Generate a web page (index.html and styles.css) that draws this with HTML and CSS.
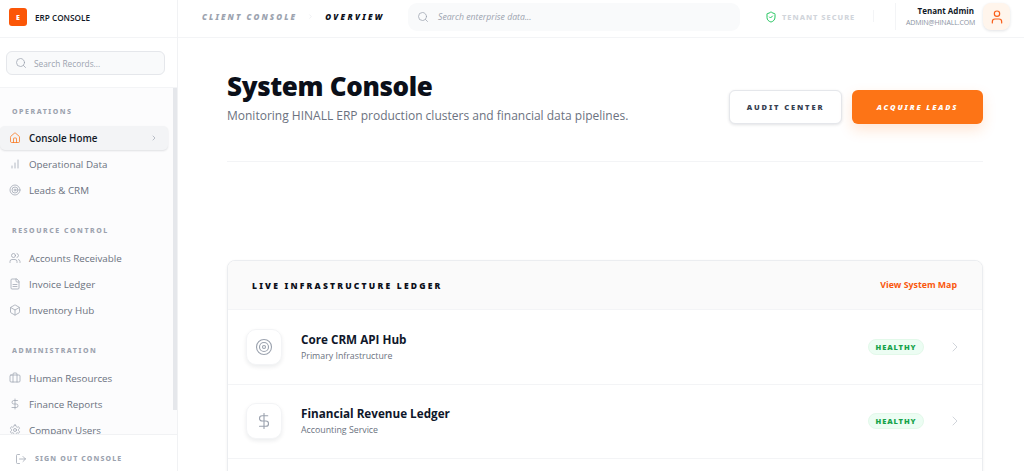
FILE: index.html
```html
<!DOCTYPE html>
<html lang="en">
<head>
<meta charset="utf-8">
<title>ERP Console</title>
<link rel="stylesheet" href="styles.css">
</head>
<body>
<div class="app">
  <aside class="sidebar">
    <div class="brand"><span class="logo">E</span><span class="brand-name">ERP CONSOLE</span></div>
    <div class="side-search-wrap">
      <div class="side-search">
        <svg class="ic" viewBox="0 0 24 24"><circle cx="11" cy="11" r="8"/><path d="m21 21-4.3-4.3"/></svg>
        <span>Search Records...</span>
      </div>
    </div>
    <nav class="nav">
      <div class="nav-label">OPERATIONS</div>
      <a class="nav-item active">
        <svg class="ic" viewBox="0 0 24 24"><path d="M15 21v-8a1 1 0 0 0-1-1h-4a1 1 0 0 0-1 1v8"/><path d="M3 10a2 2 0 0 1 .7-1.5l7-6a2 2 0 0 1 2.6 0l7 6A2 2 0 0 1 21 10v9a2 2 0 0 1-2 2H5a2 2 0 0 1-2-2z"/></svg>
        <span>Console Home</span>
        <svg class="chev" viewBox="0 0 24 24"><path d="m9 18 6-6-6-6"/></svg>
      </a>
      <a class="nav-item"><svg class="ic" viewBox="0 0 24 24"><path d="M12 20V10"/><path d="M18 20V4"/><path d="M6 20v-4"/></svg><span>Operational Data</span></a>
      <a class="nav-item"><svg class="ic" viewBox="0 0 24 24"><circle cx="12" cy="12" r="10"/><circle cx="12" cy="12" r="6"/><circle cx="12" cy="12" r="2"/></svg><span>Leads &amp; CRM</span></a>

      <div class="nav-label next">RESOURCE CONTROL</div>
      <a class="nav-item"><svg class="ic" viewBox="0 0 24 24"><path d="M16 21v-2a4 4 0 0 0-4-4H6a4 4 0 0 0-4 4v2"/><circle cx="9" cy="7" r="4"/><path d="M22 21v-2a4 4 0 0 0-3-3.870"/><path d="M16 3.130a4 4 0 0 1 0 7.750"/></svg><span>Accounts Receivable</span></a>
      <a class="nav-item"><svg class="ic" viewBox="0 0 24 24"><path d="M15 2H6a2 2 0 0 0-2 2v16a2 2 0 0 0 2 2h12a2 2 0 0 0 2-2V7z"/><path d="M14 2v4a2 2 0 0 0 2 2h4"/><path d="M16 13H8"/><path d="M16 17H8"/></svg><span>Invoice Ledger</span></a>
      <a class="nav-item"><svg class="ic" viewBox="0 0 24 24"><path d="M21 8a2 2 0 0 0-1-1.730l-7-4a2 2 0 0 0-2 0l-7 4A2 2 0 0 0 3 8v8a2 2 0 0 0 1 1.730l7 4a2 2 0 0 0 2 0l7-4A2 2 0 0 0 21 16z"/><path d="m3.300 7 8.700 5 8.700-5"/><path d="M12 22V12"/></svg><span>Inventory Hub</span></a>

      <div class="nav-label next">ADMINISTRATION</div>
      <a class="nav-item"><svg class="ic" viewBox="0 0 24 24"><path d="M16 20V4a2 2 0 0 0-2-2h-4a2 2 0 0 0-2 2v16"/><rect x="2" y="6" width="20" height="14" rx="2"/></svg><span>Human Resources</span></a>
      <a class="nav-item"><svg class="ic" viewBox="0 0 24 24"><path d="M12 2v20"/><path d="M17 5H9.500a3.500 3.500 0 0 0 0 7h5a3.500 3.500 0 0 1 0 7H6"/></svg><span>Finance Reports</span></a>
      <a class="nav-item"><svg class="ic" viewBox="0 0 24 24"><path d="M12.220 2h-.440a2 2 0 0 0-2 2v.180a2 2 0 0 1-1 1.730l-.430.250a2 2 0 0 1-2 0l-.150-.080a2 2 0 0 0-2.730.730l-.220.380a2 2 0 0 0 .730 2.730l.150.100a2 2 0 0 1 1 1.720v.510a2 2 0 0 1-1 1.740l-.150.090a2 2 0 0 0-.730 2.730l.220.380a2 2 0 0 0 2.730.730l.150-.080a2 2 0 0 1 2 0l.430.250a2 2 0 0 1 1 1.730V20a2 2 0 0 0 2 2h.440a2 2 0 0 0 2-2v-.180a2 2 0 0 1 1-1.730l.430-.250a2 2 0 0 1 2 0l.150.080a2 2 0 0 0 2.730-.730l.220-.390a2 2 0 0 0-.730-2.730l-.150-.080a2 2 0 0 1-1-1.740v-.500a2 2 0 0 1 1-1.740l.150-.090a2 2 0 0 0 .730-2.730l-.220-.380a2 2 0 0 0-2.730-.730l-.150.080a2 2 0 0 1-2 0l-.430-.250a2 2 0 0 1-1-1.730V4a2 2 0 0 0-2-2z"/><circle cx="12" cy="12" r="3"/></svg><span>Company Users</span></a>
    </nav>
    <div class="signout">
      <svg class="ic" viewBox="0 0 24 24"><path d="M9 21H5a2 2 0 0 1-2-2V5a2 2 0 0 1 2-2h4"/><path d="m16 17 5-5-5-5"/><path d="M21 12H9"/></svg>
      <span>SIGN OUT CONSOLE</span>
    </div>
  </aside>

  <div class="workspace">
    <header class="topbar">
      <div class="crumbs">
        <span class="crumb-muted">CLIENT CONSOLE</span>
        <svg class="crumb-sep" viewBox="0 0 24 24"><path d="m9 18 6-6-6-6"/></svg>
        <span class="crumb-now">OVERVIEW</span>
      </div>
      <div class="top-search">
        <svg class="ic" viewBox="0 0 24 24"><circle cx="11" cy="11" r="8"/><path d="m21 21-4.3-4.3"/></svg>
        <span>Search enterprise data...</span>
      </div>
      <div class="secure">
        <svg class="shield" viewBox="0 0 24 24"><path d="M20 13c0 5-3.500 7.500-7.660 8.950a1 1 0 0 1-.670-.010C7.500 20.500 4 18 4 13V6a1 1 0 0 1 1-1c2 0 4.500-1.200 6.240-2.720a1.170 1.170 0 0 1 1.520 0C14.510 3.810 17 5 19 5a1 1 0 0 1 1 1z"/><path d="m9 12 2 2 4-4"/></svg>
        <span>TENANT SECURE</span>
      </div>
      <div class="tick"></div>
      <div class="account">
        <div class="who"><div class="who-name">Tenant Admin</div><div class="who-mail">ADMIN@HINALL.COM</div></div>
        <div class="avatar"><svg viewBox="0 0 24 24"><path d="M19 21v-2a4 4 0 0 0-4-4H9a4 4 0 0 0-4 4v2"/><circle cx="12" cy="7" r="4"/></svg></div>
      </div>
    </header>

    <main class="main">
      <section class="hero">
        <div class="hero-text">
          <h1>System Console</h1>
          <p>Monitoring HINALL ERP production clusters and financial data pipelines.</p>
        </div>
        <div class="hero-actions">
          <button class="btn btn-white">AUDIT CENTER</button>
          <button class="btn btn-orange">ACQUIRE LEADS</button>
        </div>
      </section>

      <section class="card">
        <div class="card-head">
          <h2>LIVE INFRASTRUCTURE LEDGER</h2>
          <a class="map-link">View System Map</a>
        </div>
        <div class="row">
          <div class="row-icon"><svg viewBox="0 0 24 24"><circle cx="12" cy="12" r="10"/><circle cx="12" cy="12" r="6"/><circle cx="12" cy="12" r="2"/></svg></div>
          <div class="row-text"><div class="row-title">Core CRM API Hub</div><div class="row-sub">Primary Infrastructure</div></div>
          <span class="pill">HEALTHY</span>
          <svg class="row-chev" viewBox="0 0 24 24"><path d="m9 18 6-6-6-6"/></svg>
        </div>
        <div class="row">
          <div class="row-icon"><svg viewBox="0 0 24 24"><path d="M12 2v20"/><path d="M17 5H9.500a3.500 3.500 0 0 0 0 7h5a3.500 3.500 0 0 1 0 7H6"/></svg></div>
          <div class="row-text"><div class="row-title">Financial Revenue Ledger</div><div class="row-sub">Accounting Service</div></div>
          <span class="pill">HEALTHY</span>
          <svg class="row-chev" viewBox="0 0 24 24"><path d="m9 18 6-6-6-6"/></svg>
        </div>
        <div class="row"></div>
      </section>
    </main>
  </div>
</div>
</body>
</html>
```
FILE: styles.css
```css
* { box-sizing: border-box; }
html, body { margin: 0; height: 100%; overflow: hidden; }
body { font-family: "Open Sans", "Noto Sans", sans-serif; color: #0f172a; background: #fff; }
svg { fill: none; stroke: currentColor; stroke-width: 2; stroke-linecap: round; stroke-linejoin: round; flex: none; }
.app { display: flex; height: 471px; }

.sidebar { width: 178px; flex: none; display: flex; flex-direction: column; border-right: 1px solid #f1f2f4; background: #fff; }
.brand { height: 38px; flex: none; display: flex; align-items: center; gap: 8px; padding: 0 9px 3px; border-bottom: 1px solid #f3f4f6; }
.logo { width: 18px; height: 18px; border-radius: 3px; background: #fb5607; color: #fff; font-size: 7px; font-weight: 800; display: flex; align-items: center; justify-content: center; }
.brand-name { font-size: 8.200px; font-weight: 600; color: #111827; }
.side-search-wrap { height: 50px; flex: none; padding: 13px 12px 0 6px; border-bottom: 1px solid #f3f4f6; }
.side-search { height: 24px; border: 1px solid #e5e7eb; border-radius: 6px; background: #f9fafb; display: flex; align-items: center; gap: 7px; padding: 0 8px; color: #9ca3af; font-size: 8.300px; }
.ic { width: 12px; height: 12px; stroke-width: 1.5; color: #9ca3af; }
.nav { flex: 1; min-height: 0; padding-top: 18px; background: #fcfcfd; overflow: hidden; position: relative; }
.nav::after { content: ""; position: absolute; top: 0; right: 0; width: 4px; height: 322px; background: #e5e7eb; }
.nav-label { font-family: "Noto Sans", sans-serif; font-size: 7px; font-weight: 800; letter-spacing: .22em; color: #9ca3af; padding-left: 12px; height: 12px; line-height: 12px; margin-bottom: 8px; }
.nav-label.next { margin-top: 22px; }
.nav-item { height: 26px; display: flex; align-items: center; gap: 8px; padding-left: 9px; font-size: 9.800px; font-weight: 500; color: #6b7280; }
.nav-item.active { height: 24px; margin: 1px 9px 1px 0; color: #111827; background: #f3f4f6; border-radius: 5px; box-shadow: 0 1px 2px rgba(15,23,42,.12); font-weight: 600; }
.nav-item.active .ic { color: #f97316; }
.chev { width: 8px; height: 8px; margin-left: auto; margin-right: 10px; color: #9ca3af; }
.signout { height: 37px; flex: none; display: flex; align-items: flex-start; gap: 8px; padding: 18px 0 0 15px; line-height: 12px; border-top: 1px solid #f1f2f4; font-family: "Noto Sans", sans-serif; font-size: 7px; font-weight: 800; letter-spacing: .16em; color: #9ca3af; }

.workspace { flex: 1; min-width: 0; display: flex; flex-direction: column; }
.topbar { height: 38px; flex: none; display: flex; align-items: flex-start; padding: 3px 14px 0 24px; border-bottom: 1px solid #f3f4f6; }
.crumbs { width: 206px; height: 27px; flex: none; display: flex; align-items: center; font-family: "Noto Sans", sans-serif; font-size: 8px; font-weight: 900; font-style: italic; letter-spacing: .26em; }
.crumb-muted { color: #9ca3af; }
.crumb-sep { width: 7px; height: 7px; color: #e5e7eb; margin: 0 11px 0 10px; }
.crumb-now { color: #0b0f19; letter-spacing: .29em; }
.top-search { width: 332px; height: 28px; flex: none; border-radius: 9px; background: #f9fafb; display: flex; align-items: center; gap: 9px; padding: 0 9px; font-size: 8.700px; font-style: italic; color: #9ca3af; }
.secure { height: 27px; margin-left: 25px; display: flex; align-items: center; gap: 5px; font-family: "Noto Sans", sans-serif; font-size: 7.500px; font-weight: 800; letter-spacing: .13em; color: #d1d5db; white-space: nowrap; }
.shield { width: 12px; height: 12px; color: #22c55e; stroke-width: 2; }
.tick { width: 1px; height: 12px; margin: 7px 0 0 18px; background: #f3f4f6; }
.account { height: 27px; margin-left: 21px; padding-left: 10px; border-left: 1px solid #f3f4f6; display: flex; gap: 9px; align-items: center; }
.who { text-align: right; width: 68px; }
.who-name { font-size: 8px; font-weight: 700; color: #111827; line-height: 11px; white-space: nowrap; }
.who-mail { font-size: 7px; color: #8b93a1; line-height: 11px; margin-top: 1px; white-space: nowrap; letter-spacing: -.02em; }
.avatar { width: 27px; height: 27px; border-radius: 8px; background: #fff5ec; box-shadow: 0 1px 3px rgba(15,23,42,.12); display: flex; align-items: center; justify-content: center; color: #f95f1a; }
.avatar svg { width: 16px; height: 16px; stroke-width: 1.8; }

.main { flex: 1; min-height: 0; overflow: hidden; padding: 29px 41px 0 49px; }
.hero { height: 95px; display: flex; justify-content: space-between; align-items: flex-start; border-bottom: 1px solid #f3f4f6; }
.hero-text h1 { margin: 0; font-family: "Noto Sans", sans-serif; font-size: 26px; line-height: 38px; font-weight: 900; color: #0b0f19; letter-spacing: -.35px; }
.hero-text p { margin: 2px 0 0; font-size: 12px; line-height: 18px; font-weight: 500; color: #6b7280; }
.hero-actions { display: flex; gap: 10px; margin-top: 23px; }
.btn { height: 34px; border-radius: 6px; font-family: "Noto Sans", sans-serif; font-size: 7.500px; font-weight: 900; letter-spacing: .25em; }
.btn-white { width: 113px; background: #fff; border: 1px solid #e5e7eb; color: #374151; box-shadow: 0 1px 3px rgba(15,23,42,.12); }
.btn-orange { width: 131px; background: #fd7416; border: 0; color: #fff; font-style: italic; box-shadow: 0 6px 14px rgba(253,116,22,.18); }

.card { margin-top: 98px; border: 1px solid #ebedf0; border-radius: 8px 8px 0 0; box-shadow: 0 1px 3px rgba(15,23,42,.06); overflow: hidden; background: #fff; }
.card-head { height: 48px; display: flex; align-items: center; justify-content: space-between; padding: 0 25px 0 24px; background: #fafafa; }
.card-head h2 { margin: 0; font-family: "Noto Sans", sans-serif; font-size: 8.500px; font-weight: 900; letter-spacing: .26em; color: #0b0f19; }
.map-link { font-size: 8.800px; font-weight: 700; color: #f9580e; }
.row { height: 74.500px; display: flex; align-items: center; padding: 0 18px; border-top: 1px solid #f3f4f6; }
.row-icon { width: 36px; height: 36px; border-radius: 10px; background: #fff; border: 1px solid #f3f4f6; box-shadow: 0 2px 4px rgba(15,23,42,.08); display: flex; align-items: center; justify-content: center; color: #9ca3af; }
.row-icon svg { width: 18px; height: 18px; stroke-width: 1.5; }
.row-text { margin-left: 19px; flex: 1; }
.row-title { font-size: 11.700px; font-weight: 700; color: #0f172a; line-height: 17px; }
.row-sub { font-size: 8.800px; font-weight: 500; color: #6b7280; line-height: 13px; margin-top: 2px; }
.pill { width: 56px; height: 16px; border-radius: 8px; background: #ecfdf3; border: 1px solid #e3f9ea; color: #16a34a; font-family: "Noto Sans", sans-serif; font-size: 7.500px; font-weight: 900; letter-spacing: .12em; display: flex; align-items: center; justify-content: center; }
.row-chev { width: 16px; height: 16px; color: #d1d5db; margin-left: 23px; margin-right: 1px; stroke-width: 1.5; }
```
